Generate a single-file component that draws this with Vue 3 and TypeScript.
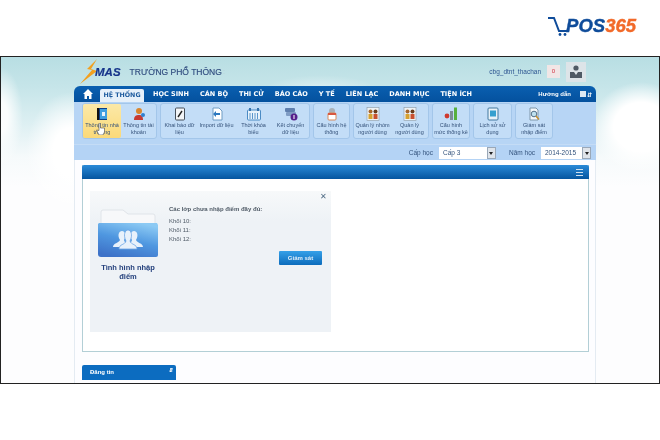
<script setup lang="ts">
const navItems = ['HỌC SINH', 'CÁN BỘ', 'THI CỬ', 'BÁO CÁO', 'Y TẾ', 'LIÊN LẠC', 'DANH MỤC', 'TIỆN ÍCH']

interface Tool {
  label: string
  icon: string
  width: number
  active?: boolean
}

const groups: Tool[][] = [
  [
    { label: 'Thông tin nhà\ntrường', icon: 'book', width: 38, active: true },
    { label: 'Thông tin tài\nkhoản', icon: 'user', width: 35 },
  ],
  [
    { label: 'Khai báo dữ\nliệu', icon: 'note', width: 37 },
    { label: 'Import dữ liệu', icon: 'import', width: 37 },
    { label: 'Thời khóa\nbiểu', icon: 'calendar', width: 37 },
    { label: 'Kết chuyển\ndữ liệu', icon: 'stack', width: 37 },
  ],
  [{ label: 'Cấu hình hệ\nthống', icon: 'gear', width: 35 }],
  [
    { label: 'Quản lý nhóm\nngười dùng', icon: 'people', width: 37 },
    { label: 'Quản lý\nngười dùng', icon: 'people', width: 37 },
  ],
  [{ label: 'Cấu hình\nmức thống kê', icon: 'chart', width: 36 }],
  [{ label: 'Lịch sử sử\ndụng', icon: 'history', width: 37 }],
  [{ label: 'Giám sát\nnhập điểm', icon: 'search', width: 36 }],
]

const grades = ['Khối 10:', 'Khối 11:', 'Khối 12:']
</script>

<template>
  <div class="page">
    <div class="brand">
      <svg class="cart" width="22" height="22" viewBox="0 0 22 22">
        <path d="M0 2h6l5 13h8" fill="none" stroke="#0f4c9a" stroke-width="2" />
        <circle cx="12" cy="18.500" r="1.400" fill="#0f4c9a" />
        <circle cx="17" cy="18.500" r="1.400" fill="#0f4c9a" />
      </svg>
      <span class="pos">POS</span><span class="num">365</span>
    </div>

    <div class="frame">
      <div class="shell">
        <header class="top">
          <div class="logo">
            <svg class="bolt" width="18" height="25" viewBox="0 0 18 25">
              <path d="M17 0 7 10l5 1-12 14 17-13-6-2z" fill="#f2a01f" />
            </svg>
            <span class="smas">MAS</span>
            <span class="school">TRƯỜNG PHỔ THÔNG</span>
            <span class="sep">:</span>
          </div>
          <div class="account">
            <span class="login">cbg_dtnt_thachan</span>
            <span class="badge">0</span>
            <span class="avatar">
              <svg width="12" height="13" viewBox="0 0 12 13">
                <circle cx="6" cy="3" r="2.600" fill="#4f5964" />
                <path d="M0 13V7h4l2 3 2-3h4v6z" fill="#4f5964" />
              </svg>
            </span>
          </div>
        </header>

        <nav class="nav">
          <svg class="home" width="10" height="10" viewBox="0 0 10 10">
            <path d="M5 0 0 5h1.500v5H4V7h2v3h2.500V5H10z" fill="#fff" />
          </svg>
          <span class="tab">HỆ THỐNG</span>
          <span v-for="item in navItems" :key="item" class="nav-item">{{ item }}</span>
          <span class="guide">Hướng dẫn</span>
          <span class="nav-tools">
            <i class="mini"></i>
            <span class="arrows">⇵</span>
          </span>
        </nav>

        <div class="ribbon">
          <div v-for="(group, g) in groups" :key="g" class="group">
            <div
              v-for="tool in group"
              :key="tool.label"
              class="tool"
              :class="{ active: tool.active }"
              :style="{ width: tool.width + 'px' }"
            >
              <svg width="14" height="14" viewBox="0 0 14 14">
                <template v-if="tool.icon === 'book'">
                  <rect x="2" y="1" width="10" height="12" fill="#0e3f86" />
                  <rect x="5" y="2" width="7" height="10" fill="#3f9fe0" />
                  <rect x="2" y="1" width="2" height="12" fill="#111" />
                  <rect x="7" y="5" width="3" height="4" fill="#e6f2fb" />
                </template>
                <template v-else-if="tool.icon === 'user'">
                  <circle cx="7" cy="4" r="3" fill="#d9862e" />
                  <path d="M2 13c0-4 2-5 5-5s4 2 4 5z" fill="#c73a32" />
                  <circle cx="11" cy="8" r="2" fill="#2f80cf" />
                </template>
                <template v-else-if="tool.icon === 'note'">
                  <rect x="2.500" y="1" width="9" height="12" rx="1" fill="#f2f5f8" stroke="#46505c" />
                  <path d="m5 10 4-6" stroke="#222" stroke-width="1.400" />
                </template>
                <template v-else-if="tool.icon === 'import'">
                  <path d="M3 1h6l3 3v9H3z" fill="#fff" stroke="#6f9cc4" />
                  <path d="M10 6H6V4L3 7l3 3V8h4z" fill="#2d79bf" />
                </template>
                <template v-else-if="tool.icon === 'calendar'">
                  <rect x="0.500" y="3" width="13" height="10" rx="1" fill="#e9f3fb" stroke="#4b8bc4" />
                  <rect x="2" y="1" width="2" height="3" fill="#3673ad" />
                  <rect x="10" y="1" width="2" height="3" fill="#3673ad" />
                  <path d="M3 6v6M5.500 6v6M8 6v6M10.500 6v6" stroke="#5b96cb" />
                </template>
                <template v-else-if="tool.icon === 'stack'">
                  <rect x="1" y="1" width="10" height="4" rx="1" fill="#5f7fae" />
                  <rect x="2" y="5" width="10" height="4" rx="1" fill="#7f9cc4" />
                  <circle cx="10" cy="10" r="3.500" fill="#55208c" />
                  <rect x="9.500" y="8" width="1" height="4" fill="#fff" />
                </template>
                <template v-else-if="tool.icon === 'gear'">
                  <circle cx="7" cy="4" r="3" fill="#a9b1b8" />
                  <rect x="3" y="6" width="8" height="7" rx="1" fill="#fff" stroke="#d98a5a" />
                  <rect x="3" y="6" width="8" height="2" fill="#d9583f" />
                </template>
                <template v-else-if="tool.icon === 'people'">
                  <rect x="1" y="0.500" width="12" height="13" fill="#eef3f6" stroke="#8b98a5" stroke-width="0.600" />
                  <circle cx="4.500" cy="4.500" r="2" fill="#a8672c" />
                  <circle cx="9.500" cy="4.500" r="2" fill="#6a3d1c" />
                  <rect x="2.500" y="7" width="4" height="5" fill="#d6a12f" />
                  <rect x="7.500" y="7" width="4" height="5" fill="#c8502f" />
                </template>
                <template v-else-if="tool.icon === 'chart'">
                  <rect x="10" y="0.500" width="3" height="12.500" fill="#57b03f" />
                  <rect x="6" y="4" width="3" height="9" fill="#7c8c98" />
                  <circle cx="3" cy="9" r="2.400" fill="#cf3a30" />
                </template>
                <template v-else-if="tool.icon === 'history'">
                  <rect x="2" y="1" width="10" height="12" rx="1" fill="#e8f2f8" stroke="#42789f" />
                  <rect x="4" y="3.500" width="6" height="6" fill="#36a0cf" />
                </template>
                <template v-else>
                  <path d="M3 1h6l2 2v10H3z" fill="#f5f8fa" stroke="#7e97aa" />
                  <circle cx="7" cy="7" r="2.800" fill="#bfe0ee" stroke="#53718a" />
                  <path d="m9 9 3 3.500" stroke="#c8902e" stroke-width="1.500" />
                </template>
              </svg>
              <span class="tool-label">{{ tool.label }}</span>
              <svg v-if="tool.active" class="pointer" width="9" height="12" viewBox="0 0 9 12">
                <path d="M3 0h1.500v5H8.500v4L7 12H3L0.500 7 3 7.500z" fill="#fff" stroke="#444" stroke-width="0.600" />
              </svg>
            </div>
          </div>
        </div>

        <div class="filters">
          <label class="filter-label">Cấp học</label>
          <span class="select level">Cấp 3<i class="drop"></i></span>
          <label class="filter-label">Năm học</label>
          <span class="select year">2014-2015<i class="drop"></i></span>
        </div>

        <main class="content">
          <section class="box">
            <div class="box-head"><i class="menu"></i></div>
            <div class="card">
              <span class="close">✕</span>
              <div class="card-left">
                <svg width="60" height="48" viewBox="0 0 60 48">
                  <defs>
                    <linearGradient id="folder" x1="0.700" y1="0" x2="0.300" y2="1">
                      <stop offset="0" stop-color="#8ccaf4" />
                      <stop offset="0.500" stop-color="#4f97e0" />
                      <stop offset="1" stop-color="#3d72c8" />
                    </linearGradient>
                  </defs>
                  <path d="M3 20V3q0-2 2-2h20l5 4h25q2 0 2 2v13z" fill="#f7f8fa" stroke="#e0e4e9" />
                  <path d="M1 14h58l1 2v30q0 2-2 2H3q-3 0-3-3V15z" fill="url(#folder)" />
                  <g fill="#e8f1fb">
                    <path d="M15 38c0-4 6-4 7-7-3-5-1-9 2-9s5 4 2 9l3 7z" />
                    <path d="M31 38l3-7c-3-5-1-9 2-9s5 4 2 9c1 3 7 3 7 7z" />
                    <path d="M21 40c0-5 6-4 7-8-3-6-1-11 2-11s5 5 2 11c1 4 7 3 7 8z" stroke="#6ca5e4" stroke-width="0.800" />
                  </g>
                </svg>
                <h3 class="card-title">Tình hình nhập điểm</h3>
              </div>
              <div class="card-body">
                <p class="missing">Các lớp chưa nhập điểm đầy đủ:</p>
                <p v-for="grade in grades" :key="grade" class="grade">{{ grade }}</p>
                <div class="actions"><button class="watch">Giám sát</button></div>
              </div>
            </div>
          </section>
          <div class="news">Đăng tin<span class="news-arrow">⇵</span></div>
        </main>
      </div>
    </div>
  </div>
</template>

<style scoped>
.page {
  width: 660px;
  height: 440px;
  background: #fff;
  font-family: "Liberation Sans", Arial, sans-serif;
  overflow: hidden;
}
.brand {
  height: 56px;
  box-sizing: border-box;
  padding: 16px 24px 0 0;
  display: flex;
  justify-content: flex-end;
  align-items: flex-start;
  font: italic 700 18.500px/20px "Liberation Sans", Arial, sans-serif;
  -webkit-text-stroke: 0.4px;
  filter: blur(0.3px);
}
.cart { margin-right: -4px; }
.pos { color: #0f4c9a; }
.num { color: #f26a2a; }

.frame {
  height: 328px;
  box-sizing: border-box;
  border: 1px solid #222;
  padding-left: 73px;
  overflow: hidden;
  background:
    radial-gradient(ellipse 22px 50px at 0 60px, rgba(255,255,255,0.9) 30%, rgba(255,255,255,0) 100%),
    radial-gradient(ellipse 45px 60px at 70px 95px, #fff 40%, rgba(255,255,255,0) 100%),
    radial-gradient(ellipse 50px 45px at 640px 70px, #fff 55%, rgba(255,255,255,0) 100%),
    radial-gradient(ellipse 60px 18px at 320px 36px, rgba(255,255,255,0.5), rgba(255,255,255,0)),
    linear-gradient(#b8dee3 0, #c6e5e9 30px, #dceff2 65px, #f6fafb 100px, #fdfdfe 130px);
}
.shell {
  width: 522px;
  height: 100%;
  display: flex;
  flex-direction: column;
  filter: blur(0.3px);
}
.top {
  height: 29px;
  flex: none;
  display: flex;
  justify-content: space-between;
  align-items: center;
  padding: 0 10px 0 6px;
}
.logo {
  display: flex;
  align-items: center;
}
.bolt { margin-right: -3px; margin-top: -1px; }
.smas {
  font: italic 700 11.500px "Liberation Sans", Arial, sans-serif;
  -webkit-text-stroke: 0.2px;
  color: #16348a;
  margin-right: 9px;
}
.school {
  font-size: 8.500px;
  color: #2f4b7e;
  -webkit-text-stroke: 0.15px;
}
.sep {
  font-size: 7px;
  color: #b9ccd4;
  margin-left: 1px;
}
.account {
  display: flex;
  align-items: center;
}
.login {
  font-size: 6.500px;
  color: #2c5490;
  margin-right: 6px;
}
.badge {
  width: 13px;
  height: 13px;
  background: #f1e6e6;
  color: #d23040;
  font-size: 6px;
  line-height: 13px;
  text-align: center;
  margin-right: 6px;
}
.avatar {
  width: 20px;
  height: 20px;
  background: #dde4e8;
  display: flex;
  align-items: center;
  justify-content: center;
}
.nav {
  height: 16px;
  flex: none;
  background: linear-gradient(#0a5fb0, #04519e);
  border-radius: 6px 6px 0 0;
  display: flex;
  align-items: center;
  padding: 0 4px 0 9px;
  color: #fff;
  font: 700 6.500px "DejaVu Sans", sans-serif;
}
.home { margin-right: 7px; }
.tab {
  background: #e6f0fa;
  color: #1d5a9e;
  width: 44px;
  height: 13px;
  margin-top: 3px;
  line-height: 12px;
  text-align: center;
  border-radius: 2px 2px 0 0;
  margin-right: 3.500px;
  white-space: nowrap;
  font-size: 6.300px;
}
.nav-item {
  margin: 0 5.500px;
  white-space: nowrap;
}
.guide {
  margin-left: auto;
  font: 700 6px "Liberation Sans", sans-serif;
  margin-right: 9px;
}
.nav-tools {
  display: flex;
  align-items: center;
  gap: 1px;
}
.mini {
  width: 6px;
  height: 6px;
  background: #dce8f3;
  display: block;
}
.arrows { font-size: 6px; }

.ribbon {
  height: 42px;
  flex: none;
  box-sizing: border-box;
  background: #b7d5f5;
  display: flex;
  gap: 3px;
  padding: 1px 0 0 8px;
}
.group {
  height: 34px;
  display: flex;
  box-sizing: content-box;
  border: 1px solid #a3c6ea;
  border-radius: 3px;
  background: #c3ddf7;
}
.tool {
  position: relative;
  display: flex;
  flex-direction: column;
  align-items: center;
  padding-top: 3px;
  box-sizing: border-box;
}
.tool.active {
  background: linear-gradient(#fbe9a8, #fbd978);
  border-radius: 2px;
}
.tool svg { flex: none; }
.tool-label {
  font-size: 5.500px;
  line-height: 6.500px;
  color: #35527a;
  text-align: center;
  margin-top: 1px;
  white-space: pre-line;
}
.tool .pointer {
  position: absolute;
  left: 13px;
  top: 19px;
}
.filters {
  height: 16px;
  flex: none;
  background: #b4d3f5;
  border-top: 1px solid #c4dcf6;
  box-sizing: border-box;
  display: flex;
  align-items: center;
  justify-content: flex-end;
  padding-right: 5px;
  font-size: 6.500px;
  color: #33537d;
}
.filter-label { margin-right: 6px; }
.select {
  background: #fff;
  height: 12px;
  line-height: 12px;
  padding-left: 4px;
  box-sizing: border-box;
  display: flex;
  justify-content: space-between;
}
.level { width: 57px; margin-right: 13px; }
.year { width: 50px; }
.drop {
  width: 9px;
  height: 12px;
  display: block;
  box-sizing: border-box;
  background: #dfe4ea;
  border: 1px solid #9aa8b8;
  position: relative;
}
.drop::after {
  content: "";
  position: absolute;
  left: 1.500px;
  top: 4px;
  border: 2px solid transparent;
  border-top: 3px solid #222;
}
.content {
  flex: 1;
  min-height: 0;
  background: #fdfdff;
  border-left: 1px solid #e4ebf2;
  border-right: 1px solid #e4ebf2;
  padding: 5px 6px 0 7px;
  overflow: hidden;
}
.box {
  height: 187px;
  box-sizing: border-box;
  border: 1px solid #b3cfd6;
  border-top: none;
  background: #fff;
}
.box-head {
  height: 14px;
  margin: 0 -1px;
  background: linear-gradient(#2a8ad8, #05559f);
  border-radius: 2px 2px 0 0;
  display: flex;
  align-items: center;
  justify-content: flex-end;
  padding-right: 6px;
}
.menu {
  display: block;
  width: 7px;
  height: 5px;
  border-top: 1px solid #cfe0ef;
  border-bottom: 1px solid #cfe0ef;
  background: linear-gradient(#cfe0ef, #cfe0ef) center / 100% 1px no-repeat;
}
.card {
  position: relative;
  width: 241px;
  height: 141px;
  margin: 12px 0 0 7px;
  background: linear-gradient(#f7f9fa, #eef2f6 30px, #eef2f6);
  display: flex;
}
.close {
  position: absolute;
  right: 4px;
  top: 1px;
  font-size: 8px;
  color: #4f6b84;
}
.card-left {
  width: 76px;
  flex: none;
  display: flex;
  flex-direction: column;
  align-items: center;
  padding-top: 18px;
  box-sizing: border-box;
}
.card-title {
  margin: 7px 0 0;
  width: 66px;
  text-align: center;
  font-size: 7.500px;
  line-height: 8.500px;
  font-weight: 700;
  color: #24407c;
}
.card-body {
  flex: 1;
  padding: 14px 9px 0 3px;
  font-size: 6px;
  color: #4f5a66;
}
.missing {
  margin: 0 0 4px;
  font-weight: 700;
  line-height: 8px;
}
.grade {
  margin: 0;
  line-height: 9px;
}
.actions {
  display: flex;
  justify-content: flex-end;
  margin-top: 7px;
}
.watch {
  width: 43px;
  height: 14px;
  border: none;
  border-radius: 1px;
  background: linear-gradient(#35a0e8, #0c6cbc);
  color: #e3f0fa;
  font: 700 6px "Liberation Sans", sans-serif;
  padding: 0;
}
.news {
  width: 94px;
  height: 15px;
  margin-top: 13px;
  box-sizing: border-box;
  background: #0c6cc0;
  border-radius: 2px 2px 0 0;
  color: #fff;
  font-size: 6px;
  font-weight: 700;
  line-height: 15px;
  padding-left: 8px;
  display: flex;
  justify-content: space-between;
}
.news-arrow {
  font-size: 5px;
  line-height: 10px;
  padding-right: 3px;
}
</style>
<style>
html, body { margin: 0; background: #fff; }
</style>
